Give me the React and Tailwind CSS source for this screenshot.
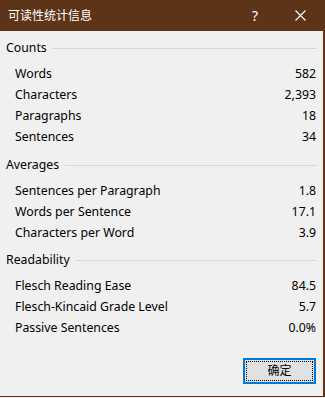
import React from "react";

const font = { fontFamily: '"Noto Sans", "Noto Sans CJK SC", sans-serif' };

function Section({ title, rows, className = "" }) {
  return (
    <div className={className}>
      <div className="flex items-center h-[16px] pl-[6px] pr-[6px]">
        <span className="text-[12.3px] leading-[16px] text-[#000]">{title}</span>
        <div className="flex-1 h-px bg-[#d7d7d7] ml-[6px] mt-[1px]" />
      </div>
      <div className="mt-[8px]">
        {rows.map(([k, v]) => (
          <div key={k} className="flex items-center justify-between h-[21px] pl-[15px] pr-[7px] text-[12.3px] text-[#000]">
            <span>{k}</span>
            <span>{v}</span>
          </div>
        ))}
      </div>
    </div>
  );
}

export default function App() {
  return (
    <div className="w-[325px] h-[398px] bg-[#f0f0f0]" style={font}>
      <div className="w-[325px] h-[397px] flex flex-col border-r-2 border-b border-[#5e3418] bg-[#f0f0f0]">
        <div className="h-[31px] bg-[#5e3418] flex items-center text-white shrink-0">
          <span className="pl-[8px] text-[12px] leading-none">可读性统计信息</span>
          <div className="flex-1" />
          <span className="text-[14px] mr-[37px]">?</span>
          <svg width="11" height="11" viewBox="0 0 11 11" className="mr-[17px]">
            <path d="M0.5 0.5 L10.5 10.5 M10.5 0.5 L0.5 10.5" stroke="white" strokeWidth="1.1" />
          </svg>
        </div>
        <Section
          className="mt-[9px]"
          title="Counts"
          rows={[
            ["Words", "582"],
            ["Characters", "2,393"],
            ["Paragraphs", "18"],
            ["Sentences", "34"],
          ]}
        />
        <Section
          className="mt-[9px]"
          title="Averages"
          rows={[
            ["Sentences per Paragraph", "1.8"],
            ["Words per Sentence", "17.1"],
            ["Characters per Word", "3.9"],
          ]}
        />
        <Section
          className="mt-[8px]"
          title="Readability"
          rows={[
            ["Flesch Reading Ease", "84.5"],
            ["Flesch-Kincaid Grade Level", "5.7"],
            ["Passive Sentences", "0.0%"],
          ]}
        />
        <div className="flex justify-end pr-[7px] mt-[19px]">
          <button className="w-[73px] h-[26px] border-2 border-[#0078d7] bg-[#e1e1e1] p-[1px] flex">
            <span className="flex-1 flex items-center justify-center border border-dotted border-black text-[12px] text-black">
              确定
            </span>
          </button>
        </div>
      </div>
    </div>
  );
}
